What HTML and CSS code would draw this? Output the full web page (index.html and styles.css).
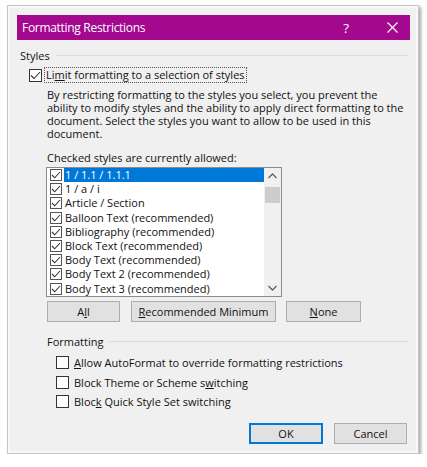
FILE: index.html
```html
<!DOCTYPE html>
<html>
<head>
<meta charset="utf-8">
<link rel="stylesheet" href="styles.css">
</head>
<body>
<div class="frame">
  <div class="titlebar">
    <span class="title">Formatting Restrictions</span>
    <span class="help">?</span>
    <svg class="close" width="11" height="11" viewBox="0 0 11 11"><path d="M0.5 0.5 L10.5 10.5 M10.5 0.5 L0.5 10.5" stroke="#fff" stroke-width="1.2" fill="none"/></svg>
  </div>
  <div class="content">
    <div class="group"><span>Styles</span><div class="rule"></div></div>
    <div class="limit-row">
      <span class="cb checked"><svg width="13" height="13" viewBox="0 0 13 13"><path d="M2 6.5 L5 9.5 L11 3" stroke="#333" stroke-width="1.1" fill="none"/></svg></span>
      <span class="focus">Li<u>m</u>it formatting to a selection of styles</span>
    </div>
    <p class="desc">By restricting formatting to the styles you select, you prevent the<br>ability to modify styles and the ability to apply direct formatting to the<br>document. Select the styles you want to allow to be used in this<br>document.</p>
    <div class="list-label">Checked styles are currently allowed:</div>
    <div class="listbox">
      <div class="items">
        <div class="item sel"><span class="lcb"><svg width="12" height="12" viewBox="0 0 12 12"><path d="M2 6 L4.7 8.8 L10 3" stroke="#333" stroke-width="1.1" fill="none"/></svg></span><span class="txt">1 / 1.1 / 1.1.1</span></div>
        <div class="item"><span class="lcb"><svg width="12" height="12" viewBox="0 0 12 12"><path d="M2 6 L4.7 8.8 L10 3" stroke="#333" stroke-width="1.1" fill="none"/></svg></span><span class="txt">1 / a / i</span></div>
        <div class="item"><span class="lcb"><svg width="12" height="12" viewBox="0 0 12 12"><path d="M2 6 L4.7 8.8 L10 3" stroke="#333" stroke-width="1.1" fill="none"/></svg></span><span class="txt">Article / Section</span></div>
        <div class="item"><span class="lcb"><svg width="12" height="12" viewBox="0 0 12 12"><path d="M2 6 L4.7 8.8 L10 3" stroke="#333" stroke-width="1.1" fill="none"/></svg></span><span class="txt">Balloon Text (recommended)</span></div>
        <div class="item"><span class="lcb"><svg width="12" height="12" viewBox="0 0 12 12"><path d="M2 6 L4.7 8.8 L10 3" stroke="#333" stroke-width="1.1" fill="none"/></svg></span><span class="txt">Bibliography (recommended)</span></div>
        <div class="item"><span class="lcb"><svg width="12" height="12" viewBox="0 0 12 12"><path d="M2 6 L4.7 8.8 L10 3" stroke="#333" stroke-width="1.1" fill="none"/></svg></span><span class="txt">Block Text (recommended)</span></div>
        <div class="item"><span class="lcb"><svg width="12" height="12" viewBox="0 0 12 12"><path d="M2 6 L4.7 8.8 L10 3" stroke="#333" stroke-width="1.1" fill="none"/></svg></span><span class="txt">Body Text (recommended)</span></div>
        <div class="item"><span class="lcb"><svg width="12" height="12" viewBox="0 0 12 12"><path d="M2 6 L4.7 8.8 L10 3" stroke="#333" stroke-width="1.1" fill="none"/></svg></span><span class="txt">Body Text 2 (recommended)</span></div>
        <div class="item"><span class="lcb"><svg width="12" height="12" viewBox="0 0 12 12"><path d="M2 6 L4.7 8.8 L10 3" stroke="#333" stroke-width="1.1" fill="none"/></svg></span><span class="txt">Body Text 3 (recommended)</span></div>
      </div>
      <div class="scrollbar">
        <svg class="arrow" width="17" height="17" viewBox="0 0 17 17"><path d="M4.5 10 L8.5 6 L12.5 10" stroke="#606060" stroke-width="1.3" fill="none"/></svg>
        <div class="thumb"></div>
        <div class="track"></div>
        <svg class="arrow" width="17" height="17" viewBox="0 0 17 17"><path d="M4.5 7 L8.5 11 L12.5 7" stroke="#606060" stroke-width="1.3" fill="none"/></svg>
      </div>
    </div>
    <div class="btnrow">
      <button class="btn b-all">A<u>l</u>l</button>
      <button class="btn b-rec"><u>R</u>ecommended Minimum</button>
      <button class="btn b-none"><u>N</u>one</button>
    </div>
    <div class="group fmt"><span>Formatting</span><div class="rule"></div></div>
    <div class="checks">
      <div class="crow"><span class="cb"></span><span><u>A</u>llow AutoFormat to override formatting restrictions</span></div>
      <div class="crow"><span class="cb"></span><span>Block Theme or Scheme s<u>w</u>itching</span></div>
      <div class="crow"><span class="cb"></span><span>Bloc<u>k</u> Quick Style Set switching</span></div>
    </div>
    <div class="footer">
      <button class="btn ok">OK</button>
      <button class="btn cancel">Cancel</button>
    </div>
  </div>
</div>
</body>
</html>
```
FILE: styles.css
```css
* { box-sizing: border-box; }
html, body { margin: 0; padding: 0; background: #ffffff; }
body {
  font-family: "Open Sans", "Noto Sans", sans-serif;
  font-size: 11px;
  color: #111;
}
.frame {
  margin: 5px 0 0 7px;
  width: 412px;
  height: 449px;
  border: 1px solid #c6c6c6;
  background: #f0f0f0;
  box-shadow: 2px 2px 3px rgba(0,0,0,0.35), inset 0 0 0 2px #f8f8f8;
  padding-top: 9px;
}
.titlebar {
  margin-left: 9px;
  width: 393px;
  height: 25px;
  background: #a3088f;
  display: flex;
  align-items: center;
  color: #fff;
}
.title { font-size: 12px; letter-spacing: -0.3px; margin-left: 5px; flex: 1; }
.help { font-size: 13.5px; margin-right: 38px; }
.close { margin-right: 12px; }
.content { padding: 0 10px 0 12px; }
.group {
  display: flex;
  align-items: center;
  height: 15px;
  margin-top: 8px;
  line-height: 15px;
}
.group .rule { flex: 1; height: 1px; background: #dcdcdc; margin-left: 6px; }
.limit-row {
  display: flex;
  align-items: center;
  height: 16px;
  margin-top: 4px;
  padding-left: 9px;
}
.cb {
  width: 13px; height: 13px;
  border: 1px solid #333;
  background: #fff;
  display: inline-block;
  flex: none;
  position: relative;
}
.cb svg { position: absolute; left: -1px; top: -1px; }
.focus {
  margin-left: 2px;
  padding: 0 1px;
  border: 1px dotted #555;
  line-height: 14px;
}
.desc {
  margin: 5px 0 0 27px;
  line-height: 13px;
  width: 370px;
  white-space: nowrap;
}
.list-label { margin: 10px 0 0 27px; line-height: 15px; }
.listbox {
  margin: 1.5px 0 0 26px;
  width: 236px;
  height: 130px;
  border: 1px solid #8c8c8c;
  background: #fff;
  display: flex;
}
.items { flex: 1; padding-top: 0.5px; }
.item {
  display: flex;
  align-items: center;
  height: 14.2px;
  padding-left: 3px;
}
.lcb {
  width: 12px; height: 12px;
  border: 1px solid #555;
  position: relative;
  flex: none;
}
.lcb svg { position: absolute; left: -1px; top: -1px; }
.txt { margin-left: 2px; padding-left: 1px; flex: 1; line-height: 14px; }
.item.sel .txt { background: #0078d7; color: #fff; }
.scrollbar {
  width: 17px;
  background: #f0f0f0;
  display: flex;
  flex-direction: column;
  align-items: center;
}
.arrow { flex: none; }
.thumb { width: 15px; height: 16px; background: #cdcdcd; margin-top: 2px; }
.track { flex: 1; }
.btnrow { display: flex; margin: 4px 0 0 27px; gap: 11px; }
.btn {
  font-family: inherit;
  font-size: 11px;
  color: #111;
  height: 21px;
  background: #e1e1e1;
  border: 1px solid #adadad;
  padding: 0;
}
.b-all { width: 73px; }
.b-rec { width: 145px; margin-right: -1px; }
.b-none { width: 75px; }
.fmt { margin-top: 12.5px; margin-left: 27px; }
.checks { margin-top: 4px; padding-left: 36px; }
.crow { display: flex; align-items: center; height: 19.5px; }
.crow span:last-child { margin-left: 5px; }
.footer { display: flex; justify-content: flex-end; gap: 11px; margin-top: 11px; padding-right: 1px; }
.ok { width: 74px; border: 1px solid #0078d7; box-shadow: inset 0 0 0 1px #0078d7; }
.cancel { width: 73px; }
```
